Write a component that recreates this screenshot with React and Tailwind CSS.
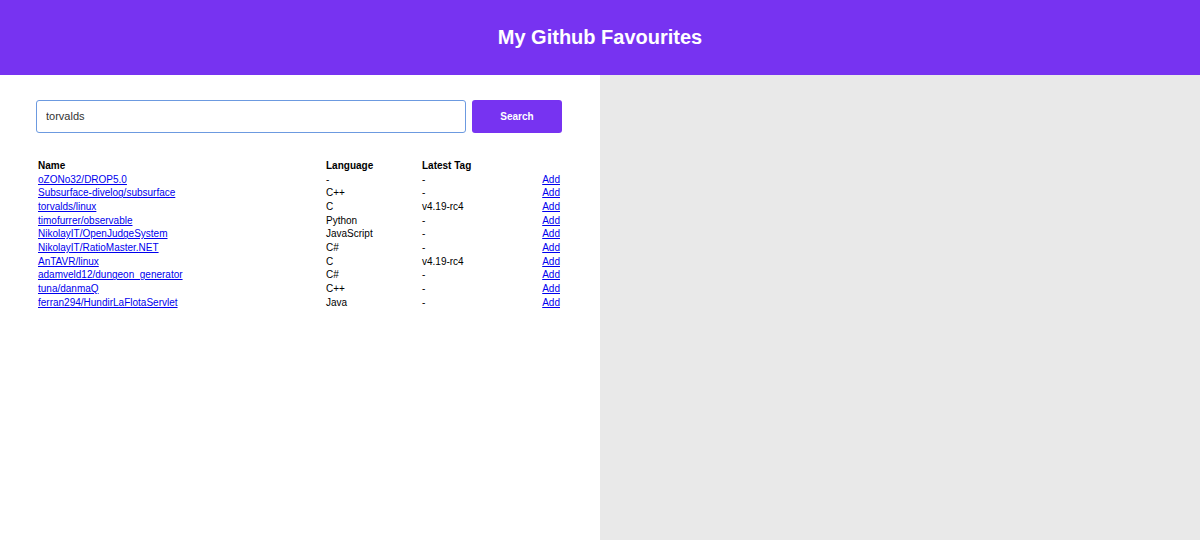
import React from 'react';

const repos = [
  { name: 'oZONo32/DROP5.0', lang: '-', tag: '-' },
  { name: 'Subsurface-divelog/subsurface', lang: 'C++', tag: '-' },
  { name: 'torvalds/linux', lang: 'C', tag: 'v4.19-rc4' },
  { name: 'timofurrer/observable', lang: 'Python', tag: '-' },
  { name: 'NikolayIT/OpenJudgeSystem', lang: 'JavaScript', tag: '-' },
  { name: 'NikolayIT/RatioMaster.NET', lang: 'C#', tag: '-' },
  { name: 'AnTAVR/linux', lang: 'C', tag: 'v4.19-rc4' },
  { name: 'adamveld12/dungeon_generator', lang: 'C#', tag: '-' },
  { name: 'tuna/danmaQ', lang: 'C++', tag: '-' },
  { name: 'ferran294/HundirLaFlotaServlet', lang: 'Java', tag: '-' },
];

export default function App() {
  return (
    <div className="w-[1200px] h-[540px] flex flex-col font-['Liberation_Sans',Arial,sans-serif] overflow-hidden">
      <header className="h-[75px] shrink-0 bg-[#7733f1] flex items-center justify-center pb-[2px]">
        <h1 className="text-white text-[20px] font-bold">My Github Favourites</h1>
      </header>
      <div className="flex-1 flex">
        <div className="w-[600px] bg-white pl-[36px] pr-[38px] pt-[25px]">
          <div className="flex gap-[6px] h-[33px]">
            <input
              defaultValue="torvalds"
              className="flex-1 border border-[#6c9ae0] rounded-[3px] px-[9px] text-[11px] text-[#333] outline-none"
            />
            <button className="w-[90px] bg-[#7733f1] text-white text-[10px] font-bold rounded-[3px]">
              Search
            </button>
          </div>
          <table className="w-full mt-[26px] text-[10px] text-black leading-[13.67px]">
            <thead>
              <tr>
                <th className="text-left font-bold px-[2px] w-[288px]">Name</th>
                <th className="text-left font-bold px-[2px] w-[96px]">Language</th>
                <th className="text-left font-bold px-[2px]">Latest Tag</th>
                <th className="px-[2px]"></th>
              </tr>
            </thead>
            <tbody>
              {repos.map((r) => (
                <tr key={r.name}>
                  <td className="px-[2px]">
                    <a href="#" className="text-[#0000ee] underline">{r.name}</a>
                  </td>
                  <td className="px-[2px]">{r.lang}</td>
                  <td className="px-[2px]">{r.tag}</td>
                  <td className="px-[2px] text-right">
                    <a href="#" className="text-[#0000ee] underline">Add</a>
                  </td>
                </tr>
              ))}
            </tbody>
          </table>
        </div>
        <div className="flex-1 bg-[#e9e9e9]"></div>
      </div>
    </div>
  );
}
